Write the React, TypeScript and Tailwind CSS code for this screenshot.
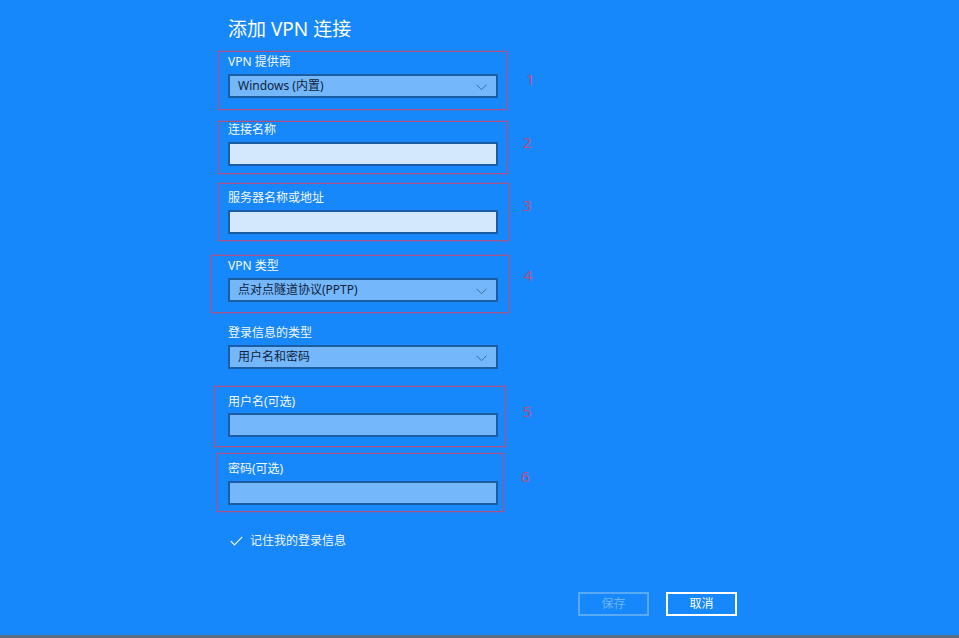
import React from "react";

const FONT = { fontFamily: '"Noto Sans", "Noto Sans CJK SC", sans-serif' };

function Chevron() {
  return (
    <svg width="11" height="7" viewBox="0 0 11 7" className="absolute right-[9px] top-[8px]">
      <path d="M0.5 0.8 L5.5 5.6 L10.5 0.8" fill="none" stroke="#3d6a9c" strokeWidth="1" />
    </svg>
  );
}

function Select({ text }: { text: string }) {
  return (
    <div className="relative h-[24px] w-[270px] border-2 border-[#1b5ca3] bg-[#74b7fb] pl-[8px] text-[12px] leading-[20px] text-[#10233a]">
      {text}
      <Chevron />
    </div>
  );
}

function Input({ light }: { light?: boolean }) {
  return (
    <div
      className={
        "h-[24px] w-[270px] border-2 border-[#1b5ca3] " +
        (light ? "bg-[#d4e8fd]" : "bg-[#74b7fb]")
      }
    />
  );
}

function Label({ text }: { text: string }) {
  return <div className="h-[16px] text-[12px] leading-[16px] text-[#f2f8ff]">{text}</div>;
}

function Note({
  box,
  num,
  numPos,
}: {
  box: string;
  num: string;
  numPos: string;
}) {
  return (
    <>
      <div
        className={"pointer-events-none absolute " + box}
        style={{ boxShadow: "inset 0 0 0 1px #a9528a, 0 0 0 0.5px rgba(169,82,138,0.5)" }}
      />
      <div
        className={"absolute text-[15px] leading-none text-[#c04f7e] " + numPos}
        style={{ fontFamily: '"Noto Sans", sans-serif' }}
      >
        {num}
      </div>
    </>
  );
}

export default function App() {
  return (
    <div className="flex h-[638px] w-[959px] flex-col bg-[#1787fc]" style={FONT}>
      <div className="flex flex-1 flex-col">
        <div className="ml-[228px] flex w-[270px] flex-col">
          <div className="mt-[15px] h-[28px] text-[19px] leading-[28px] text-white">添加 VPN 连接</div>

          <div className="relative mt-[11px] flex flex-col gap-[4px]">
            <Label text="VPN 提供商" />
            <Select text="Windows (内置)" />
            <Note box="-left-[10px] -top-[3px] w-[289px] h-[59px]" num="1" numPos="left-[298px] top-[18px]" />
          </div>

          <div className="relative mt-[24px] flex flex-col gap-[4px]">
            <Label text="连接名称" />
            <Input light />
            <Note box="-left-[10px] -top-[1px] w-[290px] h-[53px]" num="2" numPos="left-[295px] top-[13px]" />
          </div>

          <div className="relative mt-[24px] flex flex-col gap-[4px]">
            <Label text="服务器名称或地址" />
            <Input light />
            <Note box="-left-[10px] -top-[7px] w-[291px] h-[58px]" num="3" numPos="left-[295px] top-[8px]" />
          </div>

          <div className="relative mt-[24px] flex flex-col gap-[4px]">
            <Label text="VPN 类型" />
            <Select text="点对点隧道协议(PPTP)" />
            <Note box="-left-[17px] -top-[3px] w-[298px] h-[58px]" num="4" numPos="left-[296px] top-[10px]" />
          </div>

          <div className="relative mt-[23px] flex flex-col gap-[4px]">
            <Label text="登录信息的类型" />
            <Select text="用户名和密码" />
          </div>

          <div className="relative mt-[25px] flex flex-col gap-[3px]">
            <Label text="用户名(可选)" />
            <Input />
            <Note box="-left-[14px] -top-[8px] w-[292px] h-[61px]" num="5" numPos="left-[295px] top-[10px]" />
          </div>

          <div className="relative mt-[24px] flex flex-col gap-[4px]">
            <Label text="密码(可选)" />
            <Input />
            <Note box="-left-[11px] -top-[8px] w-[287px] h-[59px]" num="6" numPos="left-[293px] top-[8px]" />
          </div>

          <div className="mt-[28px] flex h-[16px] items-center">
            <svg width="13" height="10" viewBox="0 0 13 10" className="ml-[2px]">
              <path d="M0.7 5 L4.5 8.8 L12.3 0.8" fill="none" stroke="#eaf4ff" strokeWidth="1.2" />
            </svg>
            <span className="ml-[7px] text-[12px] leading-[16px] text-[#f2f8ff]">记住我的登录信息</span>
          </div>
        </div>

        <div className="mt-[43px] flex justify-end gap-[17px] pr-[222px]">
          <div className="flex h-[24px] w-[71px] items-center justify-center border-2 border-[#5aa9f8] text-[12px] text-[#6db5fa]">
            保存
          </div>
          <div className="flex h-[24px] w-[71px] items-center justify-center border-2 border-white text-[12px] text-white">
            取消
          </div>
        </div>
      </div>
      <div className="h-[3px] bg-[#5c6f82]" />
    </div>
  );
}
